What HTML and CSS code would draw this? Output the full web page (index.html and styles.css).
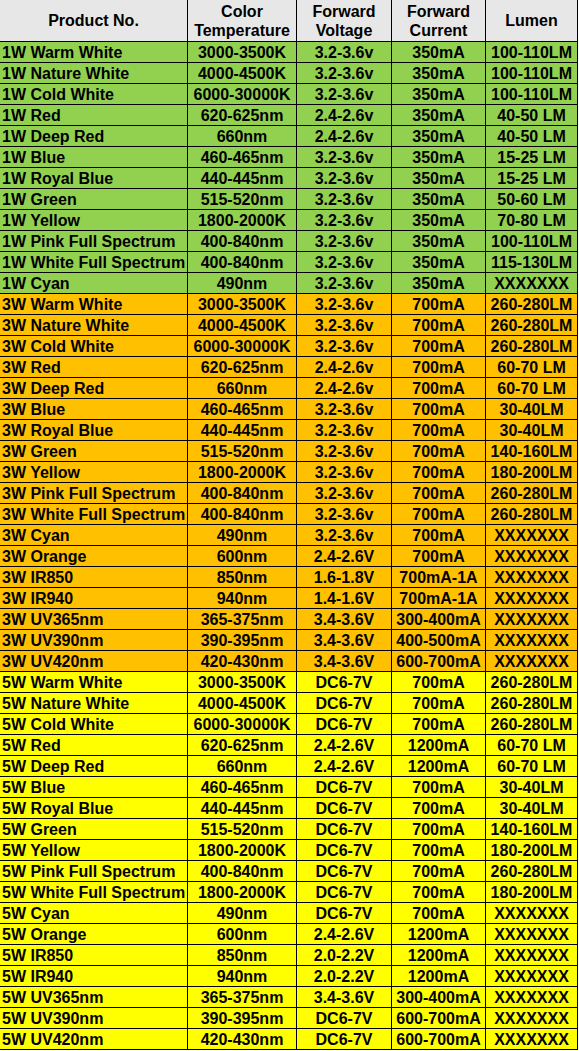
FILE: index.html
```html
<!DOCTYPE html>
<html>
<head>
<meta charset="utf-8">
<link rel="stylesheet" href="styles.css">
</head>
<body>
<div class="sheet">
  <div class="row head">
    <div class="c">Product No.</div>
    <div class="c">Color<br>Temperature</div>
    <div class="c">Forward<br>Voltage</div>
    <div class="c">Forward<br>Current</div>
    <div class="c">Lumen</div>
  </div>

  <div class="row green"><div class="c">1W Warm White</div><div class="c">3000-3500K</div><div class="c">3.2-3.6v</div><div class="c">350mA</div><div class="c">100-110LM</div></div>
  <div class="row green"><div class="c">1W Nature White</div><div class="c">4000-4500K</div><div class="c">3.2-3.6v</div><div class="c">350mA</div><div class="c">100-110LM</div></div>
  <div class="row green"><div class="c">1W Cold White</div><div class="c">6000-30000K</div><div class="c">3.2-3.6v</div><div class="c">350mA</div><div class="c">100-110LM</div></div>
  <div class="row green"><div class="c">1W Red</div><div class="c">620-625nm</div><div class="c">2.4-2.6v</div><div class="c">350mA</div><div class="c">40-50 LM</div></div>
  <div class="row green"><div class="c">1W Deep Red</div><div class="c">660nm</div><div class="c">2.4-2.6v</div><div class="c">350mA</div><div class="c">40-50 LM</div></div>
  <div class="row green"><div class="c">1W Blue</div><div class="c">460-465nm</div><div class="c">3.2-3.6v</div><div class="c">350mA</div><div class="c">15-25 LM</div></div>
  <div class="row green"><div class="c">1W Royal Blue</div><div class="c">440-445nm</div><div class="c">3.2-3.6v</div><div class="c">350mA</div><div class="c">15-25 LM</div></div>
  <div class="row green"><div class="c">1W Green</div><div class="c">515-520nm</div><div class="c">3.2-3.6v</div><div class="c">350mA</div><div class="c">50-60 LM</div></div>
  <div class="row green"><div class="c">1W Yellow</div><div class="c">1800-2000K</div><div class="c">3.2-3.6v</div><div class="c">350mA</div><div class="c">70-80 LM</div></div>
  <div class="row green"><div class="c">1W Pink Full Spectrum</div><div class="c">400-840nm</div><div class="c">3.2-3.6v</div><div class="c">350mA</div><div class="c">100-110LM</div></div>
  <div class="row green"><div class="c">1W White Full Spectrum</div><div class="c">400-840nm</div><div class="c">3.2-3.6v</div><div class="c">350mA</div><div class="c">115-130LM</div></div>
  <div class="row green"><div class="c">1W Cyan</div><div class="c">490nm</div><div class="c">3.2-3.6v</div><div class="c">350mA</div><div class="c">XXXXXXX</div></div>

  <div class="row orange"><div class="c">3W Warm White</div><div class="c">3000-3500K</div><div class="c">3.2-3.6v</div><div class="c">700mA</div><div class="c">260-280LM</div></div>
  <div class="row orange"><div class="c">3W Nature White</div><div class="c">4000-4500K</div><div class="c">3.2-3.6v</div><div class="c">700mA</div><div class="c">260-280LM</div></div>
  <div class="row orange"><div class="c">3W Cold White</div><div class="c">6000-30000K</div><div class="c">3.2-3.6v</div><div class="c">700mA</div><div class="c">260-280LM</div></div>
  <div class="row orange"><div class="c">3W Red</div><div class="c">620-625nm</div><div class="c">2.4-2.6v</div><div class="c">700mA</div><div class="c">60-70 LM</div></div>
  <div class="row orange"><div class="c">3W Deep Red</div><div class="c">660nm</div><div class="c">2.4-2.6v</div><div class="c">700mA</div><div class="c">60-70 LM</div></div>
  <div class="row orange"><div class="c">3W Blue</div><div class="c">460-465nm</div><div class="c">3.2-3.6v</div><div class="c">700mA</div><div class="c">30-40LM</div></div>
  <div class="row orange"><div class="c">3W Royal Blue</div><div class="c">440-445nm</div><div class="c">3.2-3.6v</div><div class="c">700mA</div><div class="c">30-40LM</div></div>
  <div class="row orange"><div class="c">3W Green</div><div class="c">515-520nm</div><div class="c">3.2-3.6v</div><div class="c">700mA</div><div class="c">140-160LM</div></div>
  <div class="row orange"><div class="c">3W Yellow</div><div class="c">1800-2000K</div><div class="c">3.2-3.6v</div><div class="c">700mA</div><div class="c">180-200LM</div></div>
  <div class="row orange"><div class="c">3W Pink Full Spectrum</div><div class="c">400-840nm</div><div class="c">3.2-3.6v</div><div class="c">700mA</div><div class="c">260-280LM</div></div>
  <div class="row orange"><div class="c">3W White Full Spectrum</div><div class="c">400-840nm</div><div class="c">3.2-3.6v</div><div class="c">700mA</div><div class="c">260-280LM</div></div>
  <div class="row orange"><div class="c">3W Cyan</div><div class="c">490nm</div><div class="c">3.2-3.6v</div><div class="c">700mA</div><div class="c">XXXXXXX</div></div>
  <div class="row orange"><div class="c">3W Orange</div><div class="c">600nm</div><div class="c">2.4-2.6V</div><div class="c">700mA</div><div class="c">XXXXXXX</div></div>
  <div class="row orange"><div class="c">3W IR850</div><div class="c">850nm</div><div class="c">1.6-1.8V</div><div class="c">700mA-1A</div><div class="c">XXXXXXX</div></div>
  <div class="row orange"><div class="c">3W IR940</div><div class="c">940nm</div><div class="c">1.4-1.6V</div><div class="c">700mA-1A</div><div class="c">XXXXXXX</div></div>
  <div class="row orange"><div class="c">3W UV365nm</div><div class="c">365-375nm</div><div class="c">3.4-3.6V</div><div class="c">300-400mA</div><div class="c">XXXXXXX</div></div>
  <div class="row orange"><div class="c">3W UV390nm</div><div class="c">390-395nm</div><div class="c">3.4-3.6V</div><div class="c">400-500mA</div><div class="c">XXXXXXX</div></div>
  <div class="row orange"><div class="c">3W UV420nm</div><div class="c">420-430nm</div><div class="c">3.4-3.6V</div><div class="c">600-700mA</div><div class="c">XXXXXXX</div></div>

  <div class="row yellow"><div class="c">5W Warm White</div><div class="c">3000-3500K</div><div class="c">DC6-7V</div><div class="c">700mA</div><div class="c">260-280LM</div></div>
  <div class="row yellow"><div class="c">5W Nature White</div><div class="c">4000-4500K</div><div class="c">DC6-7V</div><div class="c">700mA</div><div class="c">260-280LM</div></div>
  <div class="row yellow"><div class="c">5W Cold White</div><div class="c">6000-30000K</div><div class="c">DC6-7V</div><div class="c">700mA</div><div class="c">260-280LM</div></div>
  <div class="row yellow"><div class="c">5W Red</div><div class="c">620-625nm</div><div class="c">2.4-2.6V</div><div class="c">1200mA</div><div class="c">60-70 LM</div></div>
  <div class="row yellow"><div class="c">5W Deep Red</div><div class="c">660nm</div><div class="c">2.4-2.6V</div><div class="c">1200mA</div><div class="c">60-70 LM</div></div>
  <div class="row yellow"><div class="c">5W Blue</div><div class="c">460-465nm</div><div class="c">DC6-7V</div><div class="c">700mA</div><div class="c">30-40LM</div></div>
  <div class="row yellow"><div class="c">5W Royal Blue</div><div class="c">440-445nm</div><div class="c">DC6-7V</div><div class="c">700mA</div><div class="c">30-40LM</div></div>
  <div class="row yellow"><div class="c">5W Green</div><div class="c">515-520nm</div><div class="c">DC6-7V</div><div class="c">700mA</div><div class="c">140-160LM</div></div>
  <div class="row yellow"><div class="c">5W Yellow</div><div class="c">1800-2000K</div><div class="c">DC6-7V</div><div class="c">700mA</div><div class="c">180-200LM</div></div>
  <div class="row yellow"><div class="c">5W Pink Full Spectrum</div><div class="c">400-840nm</div><div class="c">DC6-7V</div><div class="c">700mA</div><div class="c">260-280LM</div></div>
  <div class="row yellow"><div class="c">5W White Full Spectrum</div><div class="c">1800-2000K</div><div class="c">DC6-7V</div><div class="c">700mA</div><div class="c">180-200LM</div></div>
  <div class="row yellow"><div class="c">5W Cyan</div><div class="c">490nm</div><div class="c">DC6-7V</div><div class="c">700mA</div><div class="c">XXXXXXX</div></div>
  <div class="row yellow"><div class="c">5W Orange</div><div class="c">600nm</div><div class="c">2.4-2.6V</div><div class="c">1200mA</div><div class="c">XXXXXXX</div></div>
  <div class="row yellow"><div class="c">5W IR850</div><div class="c">850nm</div><div class="c">2.0-2.2V</div><div class="c">1200mA</div><div class="c">XXXXXXX</div></div>
  <div class="row yellow"><div class="c">5W IR940</div><div class="c">940nm</div><div class="c">2.0-2.2V</div><div class="c">1200mA</div><div class="c">XXXXXXX</div></div>
  <div class="row yellow"><div class="c">5W UV365nm</div><div class="c">365-375nm</div><div class="c">3.4-3.6V</div><div class="c">300-400mA</div><div class="c">XXXXXXX</div></div>
  <div class="row yellow"><div class="c">5W UV390nm</div><div class="c">390-395nm</div><div class="c">DC6-7V</div><div class="c">600-700mA</div><div class="c">XXXXXXX</div></div>
  <div class="row yellow"><div class="c">5W UV420nm</div><div class="c">420-430nm</div><div class="c">DC6-7V</div><div class="c">600-700mA</div><div class="c">XXXXXXX</div></div>
</div>
</body>
</html>
```

FILE: styles.css
```css
html, body {
  margin: 0;
  padding: 0;
  background: #ffffff;
}

.sheet {
  width: 578px;
  font-family: "Liberation Sans", Arial, sans-serif;
  font-weight: bold;
  font-size: 16px;
  color: #000;
}

.row {
  display: grid;
  grid-template-columns: 188px 109px 95px 94px 92px;
  height: 21px;
}

.c {
  box-sizing: border-box;
  border-right: 1px solid #000;
  border-bottom: 1px solid #000;
  line-height: 20px;
  text-align: center;
  white-space: nowrap;
  overflow: hidden;
  padding-top: 1px;
}

.row .c:first-child {
  text-align: left;
  padding-left: 2px;
}

.head {
  height: 42px;
  background: #e7e7e7;
}

.head .c {
  display: flex;
  align-items: center;
  justify-content: center;
  line-height: 19px;
  padding-top: 0;
}

.head .c:first-child {
  text-align: center;
  padding-left: 0;
}

.green { background: #92d050; }
.orange { background: #ffc000; }
.yellow { background: #ffff00; }
```
